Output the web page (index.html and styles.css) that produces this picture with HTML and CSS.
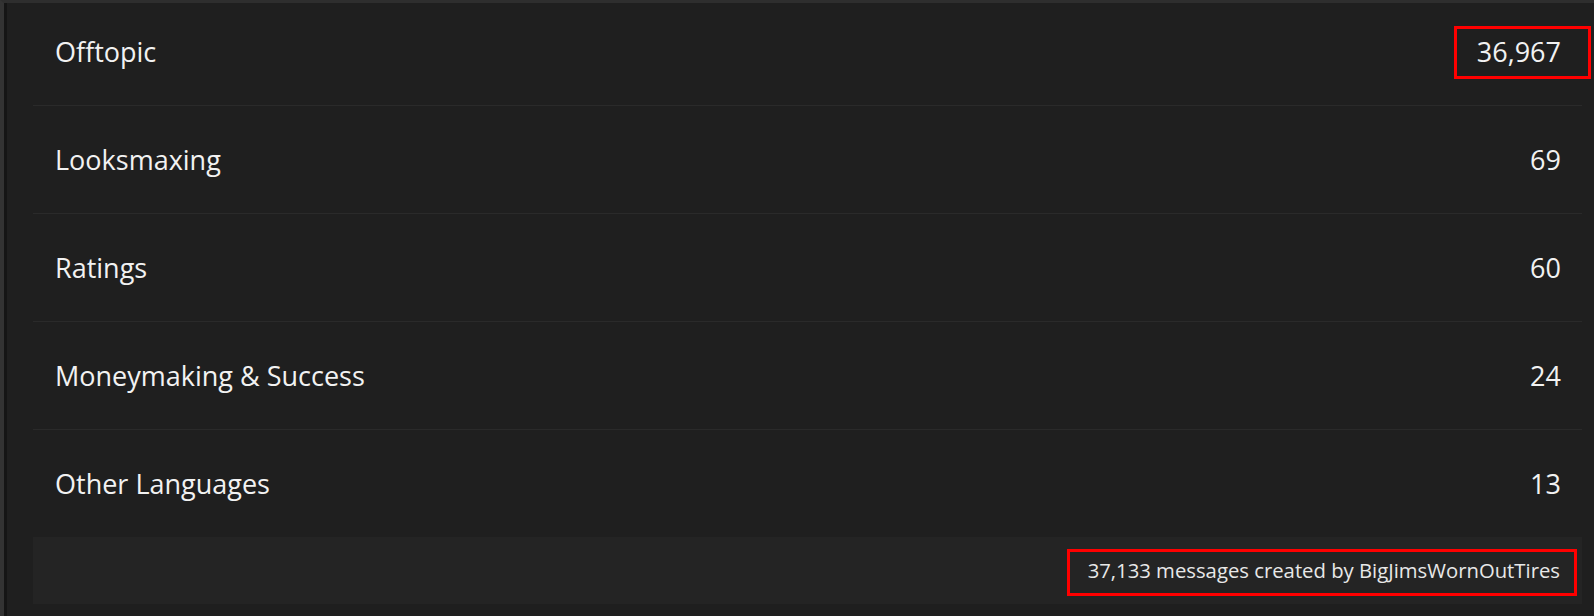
FILE: index.html
```html
<!DOCTYPE html>
<html lang="en">
<head>
<meta charset="utf-8">
<title>Messages by forum</title>
<link rel="stylesheet" href="styles.css">
</head>
<body>
<div class="frame">
  <div class="panel">
    <ul class="list">
      <li class="row"><span class="name">Offtopic</span><span class="count marked">36,967</span></li>
      <li class="row"><span class="name">Looksmaxing</span><span class="count">69</span></li>
      <li class="row"><span class="name">Ratings</span><span class="count">60</span></li>
      <li class="row"><span class="name">Moneymaking &amp; Success</span><span class="count">24</span></li>
      <li class="row"><span class="name">Other Languages</span><span class="count">13</span></li>
    </ul>
    <div class="footer"><span class="summary marked-footer">37,133 messages created by BigJimsWornOutTires</span></div>
  </div>
</div>
</body>
</html>
```

FILE: styles.css
```css
html, body {
  margin: 0;
  padding: 0;
  height: 100%;
}
body {
  background: #1f1f1f;
  color: #f2f2f2;
  font-family: "Open Sans", "Noto Sans", sans-serif;
  overflow: hidden;
}
.frame {
  height: 613px;
  border-top: 3px solid #2e2e2e;
  border-left: 4px solid #333333;
}
.panel {
  height: 100%;
  border-left: 3px solid #151515;
  padding: 0 12px 0 26px;
  display: flex;
  flex-direction: column;
}
.list {
  list-style: none;
  margin: -5px 0 0 0;
  padding: 0;
}
.row {
  height: 107px;
  display: flex;
  align-items: center;
  justify-content: space-between;
  padding: 0 21px 0 22px;
  border-bottom: 1px solid #2a2a2a;
  font-size: 27px;
  line-height: 36px;
}
.row:last-child {
  border-bottom: none;
}
.count {
  position: relative;
}
.marked::after {
  content: "";
  position: absolute;
  left: -23px;
  right: -30px;
  top: -8px;
  bottom: -9px;
  border: 3px solid #ff0000;
}
.footer {
  height: 67px;
  background: #242424;
  display: flex;
  align-items: center;
  justify-content: flex-end;
  padding-right: 22px;
  font-size: 20.3px;
  line-height: 27px;
  color: #e8e8e8;
}
.summary {
  position: relative;
}
.marked-footer::after {
  content: "";
  position: absolute;
  left: -21px;
  right: -17px;
  top: -8px;
  bottom: -12px;
  border: 3px solid #ff0000;
}
```
